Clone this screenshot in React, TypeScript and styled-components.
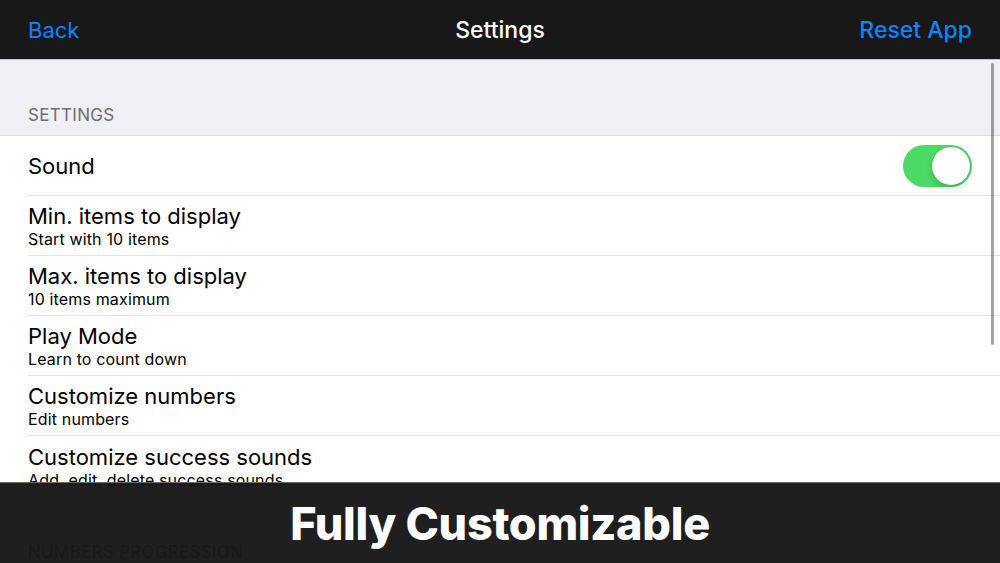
import React, { useState } from 'react';
import styled, { createGlobalStyle } from 'styled-components';

const GlobalStyle = createGlobalStyle`
  html, body {
    margin: 0;
    padding: 0;
    background: #efeff4;
  }
  * {
    box-sizing: border-box;
  }
`;

const Screen = styled.div`
  position: relative;
  width: 1000px;
  height: 563px;
  overflow: hidden;
  background: #efeff4;
  font-family: Inter, "Liberation Sans", sans-serif;
`;

const NavBar = styled.div`
  height: 60px;
  background: #181818;
  border-bottom: 1px solid #c8c7cc;
  display: grid;
  grid-template-columns: 1fr auto 1fr;
  align-items: center;
  padding: 0 28px;
`;

const NavButton = styled.span<{ $align: 'left' | 'right' }>`
  color: #0a84ff;
  font-size: ${(p) => (p.$align === 'right' ? '23px' : '22px')};
  font-weight: ${(p) => (p.$align === 'right' ? 500 : 400)};
  text-align: ${(p) => p.$align};
`;

const NavTitle = styled.span`
  color: #ffffff;
  font-size: 23px;
  font-weight: 500;
`;

const Body = styled.div`
  position: relative;
  display: flex;
  flex-direction: column;
`;

const SectionHeader = styled.div`
  height: 75px;
  display: flex;
  align-items: flex-end;
  padding: 0 28px 10px;
  color: #6d6d72;
  font-size: 17px;
  letter-spacing: 0.3px;
`;

const Group = styled.div`
  background: #ffffff;
  border-top: 1px solid #dcdce0;
  border-bottom: 1px solid #dcdce0;
`;

const Row = styled.div<{ $last?: boolean }>`
  height: 60px;
  margin-left: 28px;
  padding-right: 28px;
  display: flex;
  align-items: center;
  justify-content: space-between;
  border-bottom: ${(p) => (p.$last ? 'none' : '1px solid #e3e3e6')};
`;

const RowText = styled.div`
  display: flex;
  flex-direction: column;
  justify-content: center;
`;

const Title = styled.div`
  color: #000000;
  font-size: 22px;
  line-height: 28px;
`;

const Subtitle = styled.div`
  color: #000000;
  font-size: 16px;
  line-height: 19px;
  letter-spacing: 0.15px;
`;

const Switch = styled.button<{ $on: boolean }>`
  position: relative;
  width: 69px;
  height: 42px;
  border-radius: 21px;
  border: none;
  padding: 0;
  background: ${(p) => (p.$on ? '#4cd964' : '#e5e5ea')};
  cursor: pointer;
`;

const Knob = styled.span<{ $on: boolean }>`
  position: absolute;
  top: 2px;
  left: ${(p) => (p.$on ? '29px' : '2px')};
  width: 38px;
  height: 38px;
  border-radius: 50%;
  background: #ffffff;
  box-shadow: 0 3px 6px rgba(0, 0, 0, 0.18), 0 0 1px rgba(0, 0, 0, 0.2);
`;

const ScrollBar = styled.div`
  position: absolute;
  top: 3px;
  right: 6px;
  width: 3px;
  height: 282px;
  border-radius: 2px;
  background: rgba(0, 0, 0, 0.35);
`;

const Banner = styled.div`
  position: absolute;
  left: 0;
  right: 0;
  bottom: 0;
  height: 81px;
  background: rgba(22, 22, 22, 0.96);
  border-top: 1px solid #6a6a6a;
  display: flex;
  align-items: center;
  justify-content: center;
`;

const BannerText = styled.div`
  color: #ffffff;
  font-size: 45px;
  font-weight: 800;
  letter-spacing: -0.3px;
  margin-top: 1px;
`;

const rows = [
  { title: 'Min. items to display', sub: 'Start with 10 items' },
  { title: 'Max. items to display', sub: '10 items maximum' },
  { title: 'Play Mode', sub: 'Learn to count down' },
  { title: 'Customize numbers', sub: 'Edit numbers' },
  { title: 'Customize success sounds', sub: 'Add, edit, delete success sounds' },
];

const App: React.FC = () => {
  const [sound, setSound] = useState(true);

  return (
    <>
      <GlobalStyle />
      <Screen>
        <NavBar>
          <NavButton $align="left">Back</NavButton>
          <NavTitle>Settings</NavTitle>
          <NavButton $align="right">Reset App</NavButton>
        </NavBar>
        <Body>
          <SectionHeader>SETTINGS</SectionHeader>
          <Group>
            <Row>
              <Title>Sound</Title>
              <Switch $on={sound} onClick={() => setSound(!sound)}>
                <Knob $on={sound} />
              </Switch>
            </Row>
            {rows.map((r, i) => (
              <Row key={r.title} $last={i === rows.length - 1}>
                <RowText>
                  <Title>{r.title}</Title>
                  <Subtitle>{r.sub}</Subtitle>
                </RowText>
              </Row>
            ))}
          </Group>
          <SectionHeader>NUMBERS PROGRESSION</SectionHeader>
          <ScrollBar />
        </Body>
        <Banner>
          <BannerText>Fully Customizable</BannerText>
        </Banner>
      </Screen>
    </>
  );
};

export default App;
